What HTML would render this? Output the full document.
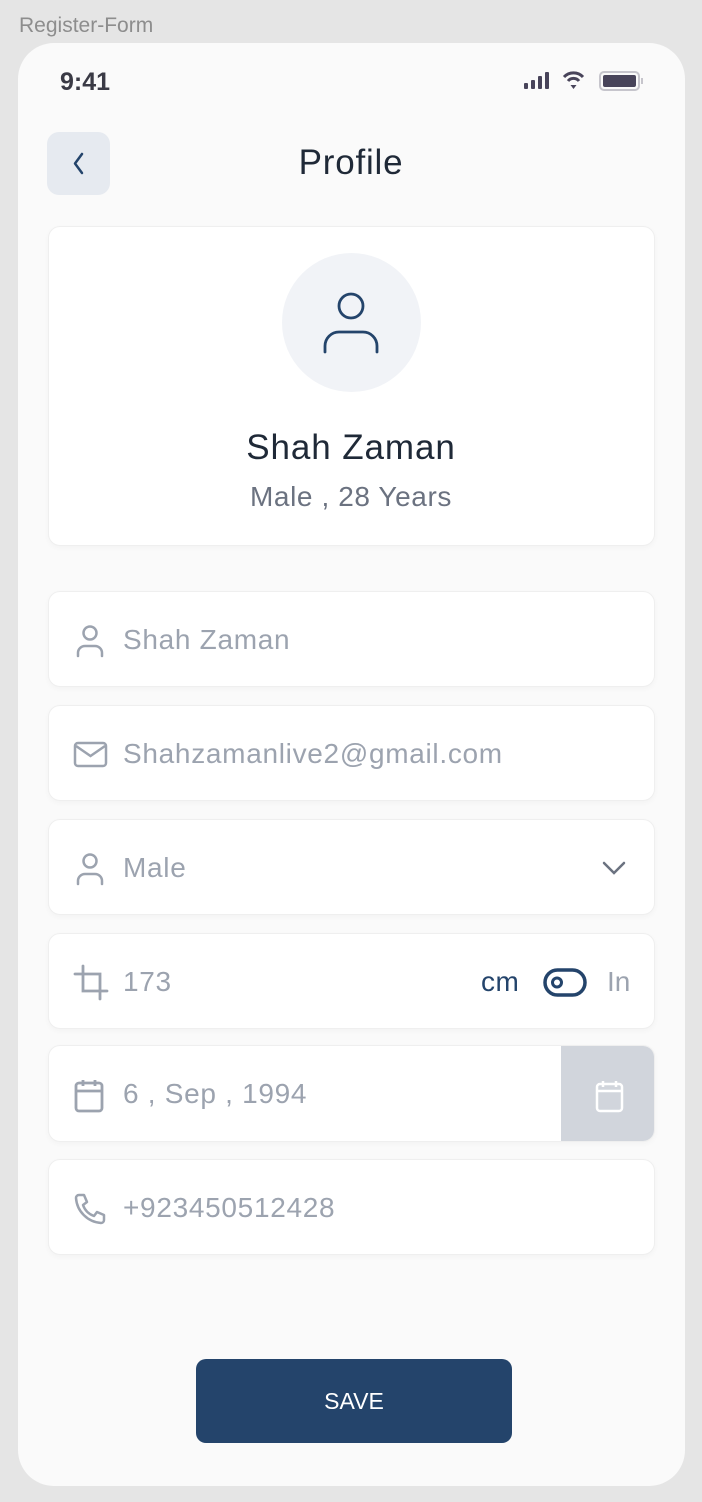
<!DOCTYPE html>
<html><head><meta charset="utf-8"><style>
*{margin:0;padding:0;box-sizing:border-box}
body{width:702px;height:1502px;background:#e5e5e5;font-family:"Liberation Sans",sans-serif;position:relative;overflow:hidden}
.abs{position:absolute}
.lbl{left:19px;top:14px;font-size:21px;color:#8d8d8d}
.phone{left:18px;top:43px;width:667px;height:1443px;background:#fafafa;border-radius:36px}
.time{left:60px;top:68px;font-size:25px;font-weight:bold;color:#3a3a45}
.back{left:47px;top:132px;width:63px;height:63px;background:#e6eaf0;border-radius:12px}
.title{left:0;width:702px;top:143px;text-align:center;font-size:35px;letter-spacing:0.8px;color:#1f2937}
.card{left:48px;width:607px;background:#fff;border-radius:12px;border:1px solid #efefef;box-shadow:0 2px 6px rgba(0,0,0,0.03)}
.field{height:96px}
.ftxt{position:absolute;left:74px;top:32px;font-size:28px;letter-spacing:0.7px;color:#9ca3af}
.ico{position:absolute;left:24px;top:32px}
.save{left:196px;top:1359px;width:316px;height:84px;background:#24446b;border-radius:10px;color:#fff;font-size:23px;text-align:center;line-height:84px}
</style></head><body>
<div class="abs lbl">Register-Form</div>
<div class="abs phone"></div>
<div class="abs time">9:41</div>
<svg class="abs" style="left:522px;top:70px" width="122" height="24">
<rect x="2" y="13" width="4" height="6" rx="1" fill="#48445a"/><rect x="9" y="10" width="4" height="9" rx="1" fill="#48445a"/><rect x="16" y="6" width="4" height="13" rx="1" fill="#48445a"/><rect x="23" y="2" width="4" height="17" rx="1" fill="#48445a"/>
<path d="M42 7a13 13 0 0 1 19 0" stroke="#48445a" stroke-width="3" fill="none"/><path d="M46 11a7 7 0 0 1 11 0" stroke="#48445a" stroke-width="3" fill="none"/><path d="M48.5 15l3 4 3-4z" fill="#48445a"/>
<rect x="78" y="2" width="39" height="18" rx="4" fill="none" stroke="#c6c5cc" stroke-width="2"/><rect x="81" y="5" width="33" height="12" rx="2" fill="#48445a"/><rect x="119" y="8" width="2" height="6" fill="#c6c5cc"/>
</svg>
<div class="abs back"><svg width="63" height="63"><path d="M35 22l-7 9.5 7 9.5" stroke="#24446b" stroke-width="2.5" fill="none" stroke-linecap="round" stroke-linejoin="round"/></svg></div>
<div class="abs title">Profile</div>
<div class="abs card" style="top:226px;height:320px"></div>
<div class="abs" style="left:282px;top:253px;width:139px;height:139px;border-radius:50%;background:#f1f3f7"></div>
<svg class="abs" style="left:320px;top:290px" width="62" height="66"><circle cx="31" cy="16" r="12" stroke="#24446b" stroke-width="2.8" fill="none"/><path d="M5 62v-6a14 14 0 0 1 14-14h24a14 14 0 0 1 14 14v6" stroke="#24446b" stroke-width="2.8" fill="none" stroke-linecap="round"/></svg>
<div class="abs" style="left:0;width:702px;top:428px;text-align:center;font-size:35px;letter-spacing:0.9px;color:#1f2937">Shah Zaman</div>
<div class="abs" style="left:0;width:702px;top:481px;text-align:center;font-size:28px;letter-spacing:0.6px;color:#6b7280">Male , 28 Years</div>

<div class="abs card field" style="top:591px"><svg class="ico" width="34" height="34"><circle cx="17" cy="9" r="6.5" stroke="#9ca3af" stroke-width="2.5" fill="none"/><path d="M5 32v-3a7 7 0 0 1 7-7h10a7 7 0 0 1 7 7v3" stroke="#9ca3af" stroke-width="2.5" fill="none" stroke-linecap="round"/></svg><div class="ftxt">Shah Zaman</div></div>
<div class="abs card field" style="top:705px"><svg class="ico" width="36" height="34"><rect x="2" y="5" width="31" height="23" rx="3" stroke="#9ca3af" stroke-width="2.5" fill="none"/><path d="M3 8l14.5 10L32 8" stroke="#9ca3af" stroke-width="2.5" fill="none"/></svg><div class="ftxt">Shahzamanlive2@gmail.com</div></div>
<div class="abs card field" style="top:819px"><svg class="ico" width="34" height="34"><circle cx="17" cy="9" r="6.5" stroke="#9ca3af" stroke-width="2.5" fill="none"/><path d="M5 32v-3a7 7 0 0 1 7-7h10a7 7 0 0 1 7 7v3" stroke="#9ca3af" stroke-width="2.5" fill="none" stroke-linecap="round"/></svg><div class="ftxt">Male</div>
<svg style="position:absolute;left:552px;top:38px" width="26" height="20"><path d="M3 5l10 10 10-10" stroke="#6b7280" stroke-width="2.5" fill="none" stroke-linecap="round"/></svg></div>
<div class="abs card field" style="top:933px"><svg class="ico" style="top:30px" width="36" height="38"><path d="M10 2v25h24M2 10h25v25" stroke="#9ca3af" stroke-width="2.8" fill="none" stroke-linecap="round"/></svg><div class="ftxt">173</div>
<div style="position:absolute;left:432px;top:32px;font-size:28px;letter-spacing:0.5px;color:#24446b">cm</div>
<svg style="position:absolute;left:494px;top:34px" width="44" height="30"><rect x="2" y="2" width="40" height="25" rx="12.5" stroke="#24446b" stroke-width="3.5" fill="none"/><circle cx="14" cy="14.5" r="4.5" stroke="#24446b" stroke-width="3" fill="none"/></svg>
<div style="position:absolute;left:558px;top:32px;font-size:28px;color:#9ca3af">In</div></div>
<div class="abs card field" style="top:1045px;height:97px;overflow:hidden"><svg class="ico" style="top:32px" width="34" height="36"><rect x="3" y="5" width="26" height="28" rx="3" stroke="#9ca3af" stroke-width="2.8" fill="none"/><path d="M3 13h26M10 2v6M22 2v6" stroke="#9ca3af" stroke-width="2.8" fill="none"/></svg><div class="ftxt">6 , Sep , 1994</div>
<div style="position:absolute;left:512px;top:-1px;width:96px;height:98px;background:#d1d5dc"></div>
<svg style="position:absolute;left:545px;top:32px" width="34" height="36"><rect x="3" y="6" width="25" height="27" rx="3" stroke="#fff" stroke-width="2.5" fill="none"/><path d="M3 13h25M9 3v6M22 3v6" stroke="#fff" stroke-width="2.5" fill="none"/></svg></div>
<div class="abs card field" style="top:1159px"><svg class="ico" width="36" height="36"><path d="M6 3h5l3 7-4 3a18 18 0 0 0 11 11l3-4 7 3v5a3 3 0 0 1-3 3A27 27 0 0 1 3 6a3 3 0 0 1 3-3z" stroke="#9ca3af" stroke-width="2.5" fill="none" stroke-linejoin="round"/></svg><div class="ftxt">+923450512428</div></div>
<div class="abs save">SAVE</div>
</body></html>
